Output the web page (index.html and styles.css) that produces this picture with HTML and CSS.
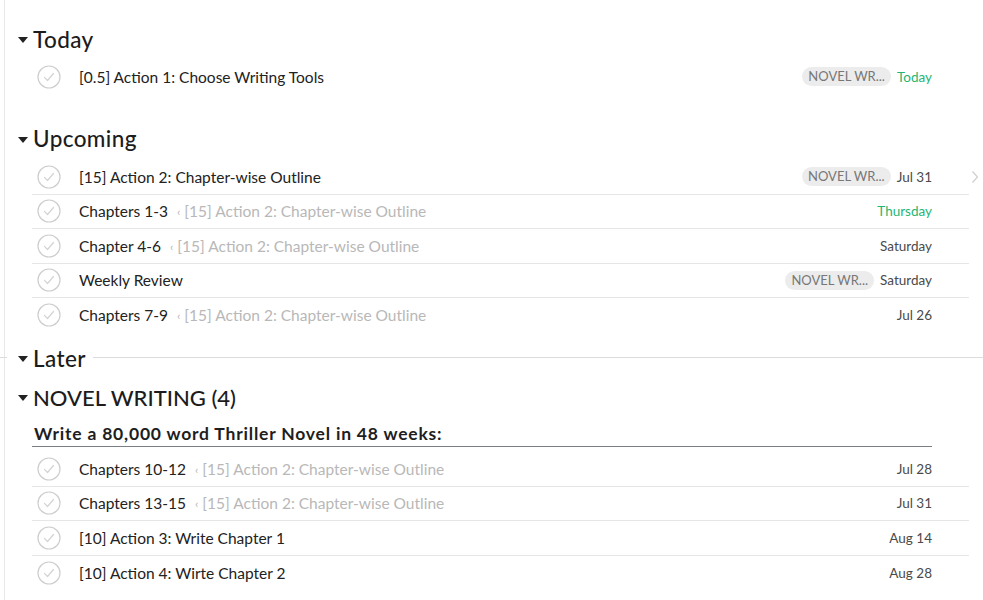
FILE: index.html
```html
<!DOCTYPE html>
<html>
<head>
<meta charset="utf-8">
<link rel="stylesheet" href="styles.css">
</head>
<body>
<div class="app">
  <section class="section today">
    <h2 class="heading"><span class="label"><span class="tri"></span>Today</span></h2>
    <ul class="rows">
      <li class="row plain">
        <span class="check"><svg viewBox="0 0 24 24" width="24" height="24"><circle cx="12" cy="12" r="11" fill="none" stroke="#cdcdcd" stroke-width="1.2"/><path d="M7.5 12.3l3 3.2 6-7" fill="none" stroke="#d3d3d3" stroke-width="1.2" stroke-linecap="round" stroke-linejoin="round"/></svg></span>
        <span class="title">[0.5] Action 1: Choose Writing Tools</span>
        <span class="meta"><span class="tag">NOVEL WR...</span><span class="date green">Today</span></span>
      </li>
    </ul>
  </section>

  <section class="section upcoming">
    <h2 class="heading"><span class="label"><span class="tri"></span>Upcoming</span></h2>
    <ul class="rows">
      <li class="row">
        <span class="check"><svg viewBox="0 0 24 24" width="24" height="24"><circle cx="12" cy="12" r="11" fill="none" stroke="#cdcdcd" stroke-width="1.2"/><path d="M7.5 12.3l3 3.2 6-7" fill="none" stroke="#d3d3d3" stroke-width="1.2" stroke-linecap="round" stroke-linejoin="round"/></svg></span>
        <span class="title">[15] Action 2: Chapter-wise Outline</span>
        <span class="meta"><span class="tag">NOVEL WR...</span><span class="date">Jul 31</span></span>
        <svg class="chev" viewBox="0 0 8 14" width="8" height="14"><path d="M1.5 1.5l5 5.5-5 5.5" fill="none" stroke="#cfcfcf" stroke-width="1.2"/></svg>
      </li>
      <li class="row">
        <span class="check"><svg viewBox="0 0 24 24" width="24" height="24"><circle cx="12" cy="12" r="11" fill="none" stroke="#cdcdcd" stroke-width="1.2"/><path d="M7.5 12.3l3 3.2 6-7" fill="none" stroke="#d3d3d3" stroke-width="1.2" stroke-linecap="round" stroke-linejoin="round"/></svg></span>
        <span class="title">Chapters 1-3</span><span class="parent"><span class="lt">‹</span> [15] Action 2: Chapter-wise Outline</span>
        <span class="meta"><span class="date green">Thursday</span></span>
      </li>
      <li class="row">
        <span class="check"><svg viewBox="0 0 24 24" width="24" height="24"><circle cx="12" cy="12" r="11" fill="none" stroke="#cdcdcd" stroke-width="1.2"/><path d="M7.5 12.3l3 3.2 6-7" fill="none" stroke="#d3d3d3" stroke-width="1.2" stroke-linecap="round" stroke-linejoin="round"/></svg></span>
        <span class="title">Chapter 4-6</span><span class="parent"><span class="lt">‹</span> [15] Action 2: Chapter-wise Outline</span>
        <span class="meta"><span class="date">Saturday</span></span>
      </li>
      <li class="row">
        <span class="check"><svg viewBox="0 0 24 24" width="24" height="24"><circle cx="12" cy="12" r="11" fill="none" stroke="#cdcdcd" stroke-width="1.2"/><path d="M7.5 12.3l3 3.2 6-7" fill="none" stroke="#d3d3d3" stroke-width="1.2" stroke-linecap="round" stroke-linejoin="round"/></svg></span>
        <span class="title">Weekly Review</span>
        <span class="meta"><span class="tag">NOVEL WR...</span><span class="date">Saturday</span></span>
      </li>
      <li class="row">
        <span class="check"><svg viewBox="0 0 24 24" width="24" height="24"><circle cx="12" cy="12" r="11" fill="none" stroke="#cdcdcd" stroke-width="1.2"/><path d="M7.5 12.3l3 3.2 6-7" fill="none" stroke="#d3d3d3" stroke-width="1.2" stroke-linecap="round" stroke-linejoin="round"/></svg></span>
        <span class="title">Chapters 7-9</span><span class="parent"><span class="lt">‹</span> [15] Action 2: Chapter-wise Outline</span>
        <span class="meta"><span class="date">Jul 26</span></span>
      </li>
    </ul>
  </section>

  <section class="section later">
    <h2 class="heading ruled"><span class="label"><span class="tri"></span>Later</span></h2>
  </section>

  <section class="section project">
    <h2 class="heading caps"><span class="label"><span class="tri"></span>NOVEL WRITING (4)</span></h2>
    <div class="subhead">Write a 80,000 word Thriller Novel in 48 weeks:</div>
    <ul class="rows">
      <li class="row">
        <span class="check"><svg viewBox="0 0 24 24" width="24" height="24"><circle cx="12" cy="12" r="11" fill="none" stroke="#cdcdcd" stroke-width="1.2"/><path d="M7.5 12.3l3 3.2 6-7" fill="none" stroke="#d3d3d3" stroke-width="1.2" stroke-linecap="round" stroke-linejoin="round"/></svg></span>
        <span class="title">Chapters 10-12</span><span class="parent"><span class="lt">‹</span> [15] Action 2: Chapter-wise Outline</span>
        <span class="meta"><span class="date">Jul 28</span></span>
      </li>
      <li class="row">
        <span class="check"><svg viewBox="0 0 24 24" width="24" height="24"><circle cx="12" cy="12" r="11" fill="none" stroke="#cdcdcd" stroke-width="1.2"/><path d="M7.5 12.3l3 3.2 6-7" fill="none" stroke="#d3d3d3" stroke-width="1.2" stroke-linecap="round" stroke-linejoin="round"/></svg></span>
        <span class="title">Chapters 13-15</span><span class="parent"><span class="lt">‹</span> [15] Action 2: Chapter-wise Outline</span>
        <span class="meta"><span class="date">Jul 31</span></span>
      </li>
      <li class="row">
        <span class="check"><svg viewBox="0 0 24 24" width="24" height="24"><circle cx="12" cy="12" r="11" fill="none" stroke="#cdcdcd" stroke-width="1.2"/><path d="M7.5 12.3l3 3.2 6-7" fill="none" stroke="#d3d3d3" stroke-width="1.2" stroke-linecap="round" stroke-linejoin="round"/></svg></span>
        <span class="title">[10] Action 3: Write Chapter 1</span>
        <span class="meta"><span class="date">Aug 14</span></span>
      </li>
      <li class="row">
        <span class="check"><svg viewBox="0 0 24 24" width="24" height="24"><circle cx="12" cy="12" r="11" fill="none" stroke="#cdcdcd" stroke-width="1.2"/><path d="M7.5 12.3l3 3.2 6-7" fill="none" stroke="#d3d3d3" stroke-width="1.2" stroke-linecap="round" stroke-linejoin="round"/></svg></span>
        <span class="title">[10] Action 4: Wirte Chapter 2</span>
        <span class="meta"><span class="date">Aug 28</span></span>
      </li>
    </ul>
  </section>
</div>
</body>
</html>
```
FILE: styles.css
```css
* { box-sizing: border-box; }
html, body { margin: 0; padding: 0; background: #fff; }
body {
  font-family: "Lato", "Liberation Sans", sans-serif;
  color: #222;
  overflow: hidden;
}
.app {
  margin-left: 4px;
  border-left: 1px solid #e8e8e8;
  min-height: 600px;
  padding-top: 21px;
}
.section { margin: 0; }
.heading {
  margin: 0;
  height: 36px;
  display: flex;
  align-items: center;
  padding-left: 13px;
  font-size: 22.5px;
  font-weight: 500;
  color: #1c1c1c;
  letter-spacing: 0.4px;
}
.heading.caps { font-size: 22px; letter-spacing: 0; }
.label { display: flex; align-items: center; background: #fff; }
.tri {
  width: 0; height: 0;
  border-left: 5px solid transparent;
  border-right: 5px solid transparent;
  border-top: 6px solid #222;
  margin-right: 5px;
  margin-top: 2px;
}
.rows {
  list-style: none;
  margin: 2.5px 0 0 27px;
  padding: 0;
  width: 937px;
}
.upcoming .rows { margin-top: 3.5px; }
.row {
  position: relative;
  height: 34.5px;
  display: flex;
  align-items: center;
  border-bottom: 1px solid #e6e6e6;
  padding-left: 5px;
  padding-right: 37px;
  font-size: 15.5px;
  white-space: nowrap;
}
.row:last-child, .row.plain { border-bottom: none; }
.check { width: 24px; height: 24px; display: flex; margin-right: 18px; }
.title { color: #222; }
.parent { color: #b8b8b8; margin-left: 9px; }
.lt { font-size: 12px; position: relative; top: -1px; }
.meta { margin-left: auto; display: flex; align-items: center; gap: 6px; }
.tag {
  background: #ececec;
  color: #777;
  font-size: 13px;
  border-radius: 10px;
  height: 19px;
  line-height: 19px;
  padding: 0 6px;
}
.date { font-size: 13.5px; color: #4a4a4a; }
.date.green { color: #1fb575; }
.chev { position: absolute; right: -10px; top: 10px; }

.upcoming { margin-top: 26.5px; }
.later { margin-top: 7.5px; }
.heading.ruled { position: relative; padding-left: 2px; }
.heading.ruled::before {
  content: "";
  position: absolute;
  left: -5px; right: 0;
  top: 17px;
  border-top: 1px solid #dcdcdc;
}
.heading.ruled .label { position: relative; padding: 0 7px 0 11px; }
.project { margin-top: 3px; }
.subhead {
  margin: 4px 0 0 27px;
  width: 900px;
  height: 28px;
  padding-left: 2px;
  padding-top: 4px;
  font-size: 17.5px;
  font-weight: 700;
  letter-spacing: 0.8px;
  color: #1e1e1e;
  border-bottom: 1px solid #7a7e85;
}
.project .rows { margin-top: 5px; }
```
